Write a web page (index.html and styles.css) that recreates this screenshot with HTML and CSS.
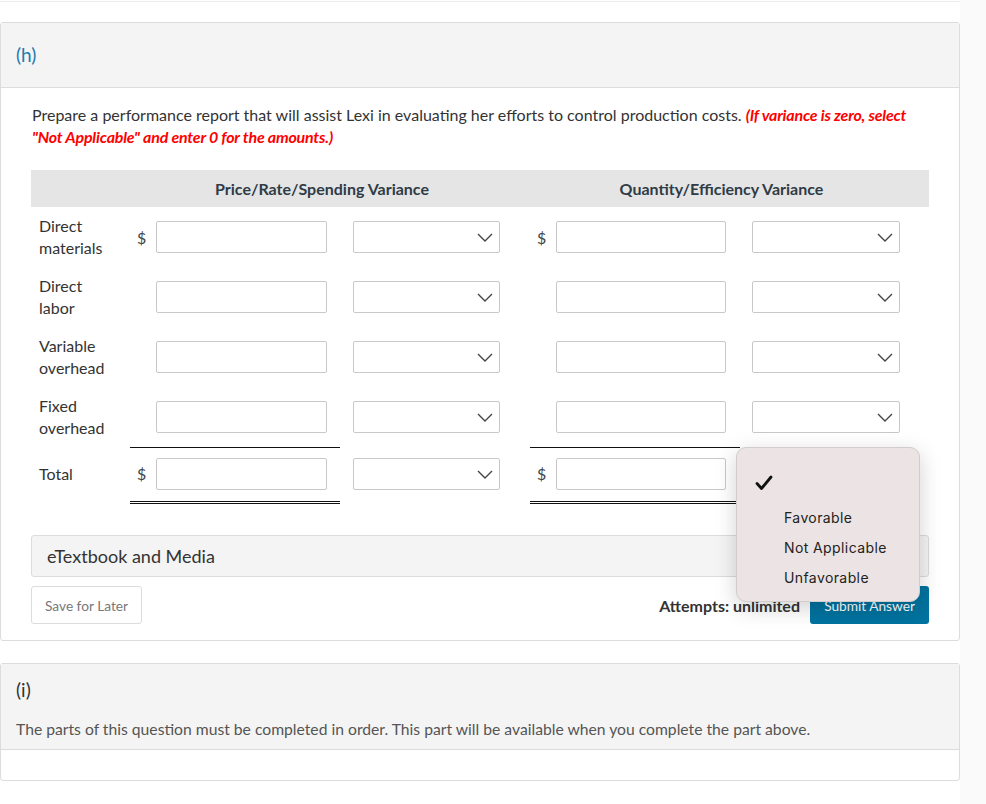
FILE: index.html
```html
<!DOCTYPE html>
<html>
<head>
<meta charset="utf-8">
<link rel="stylesheet" href="styles.css">
</head>
<body>
<div class="page">
  <main class="col">
    <div class="prev"></div>
    <section class="card">
      <div class="card-head"><span class="part">(h)</span></div>
      <div class="card-body">
        <p class="prompt">Prepare a performance report that will assist Lexi in evaluating her efforts to control production costs. <em class="warn">(If variance is zero, select "Not Applicable" and enter 0 for the amounts.)</em></p>
        <div class="grid">
          <div class="thead">
            <div class="th th1">Price/Rate/Spending Variance</div>
            <div class="th th2">Quantity/Efficiency Variance</div>
          </div>

          <div class="row">
            <div class="lbl">Direct<br>materials</div>
            <div class="cur">$</div><div class="inp"></div><div class="sp"></div><div class="sel"><svg viewBox="0 0 16 9"><path d="M1 1l7 7 7-7"/></svg></div>
            <div class="sp2"></div>
            <div class="cur">$</div><div class="inp"></div><div class="sp"></div><div class="sel"><svg viewBox="0 0 16 9"><path d="M1 1l7 7 7-7"/></svg></div>
          </div>
          <div class="row">
            <div class="lbl">Direct<br>labor</div>
            <div class="cur"></div><div class="inp"></div><div class="sp"></div><div class="sel"><svg viewBox="0 0 16 9"><path d="M1 1l7 7 7-7"/></svg></div>
            <div class="sp2"></div>
            <div class="cur"></div><div class="inp"></div><div class="sp"></div><div class="sel"><svg viewBox="0 0 16 9"><path d="M1 1l7 7 7-7"/></svg></div>
          </div>
          <div class="row">
            <div class="lbl">Variable<br>overhead</div>
            <div class="cur"></div><div class="inp"></div><div class="sp"></div><div class="sel"><svg viewBox="0 0 16 9"><path d="M1 1l7 7 7-7"/></svg></div>
            <div class="sp2"></div>
            <div class="cur"></div><div class="inp"></div><div class="sp"></div><div class="sel"><svg viewBox="0 0 16 9"><path d="M1 1l7 7 7-7"/></svg></div>
          </div>
          <div class="row">
            <div class="lbl">Fixed<br>overhead</div>
            <div class="cur"></div><div class="inp"></div><div class="sp"></div><div class="sel"><svg viewBox="0 0 16 9"><path d="M1 1l7 7 7-7"/></svg></div>
            <div class="sp2"></div>
            <div class="cur"></div><div class="inp"></div><div class="sp"></div><div class="sel"><svg viewBox="0 0 16 9"><path d="M1 1l7 7 7-7"/></svg></div>
          </div>
          <div class="row total">
            <div class="lbl">Total</div>
            <div class="cur">$</div><div class="inp"></div><div class="sp"></div><div class="sel"><svg viewBox="0 0 16 9"><path d="M1 1l7 7 7-7"/></svg></div>
            <div class="sp2"></div>
            <div class="cur">$</div><div class="inp"></div><div class="sp"></div><div class="sel"><svg viewBox="0 0 16 9"><path d="M1 1l7 7 7-7"/></svg></div>
            <div class="rule rule-a"></div>
            <div class="rule rule-b"></div>
            <div class="dbl dbl-a"></div>
            <div class="dbl dbl-b"></div>
          </div>
        </div>

        <div class="media">eTextbook and Media</div>
        <div class="actions">
          <button class="save">Save for Later</button>
          <div class="right">
            <span class="attempts">Attempts: unlimited</span>
            <button class="submit">Submit Answer</button>
          </div>
        </div>
      </div>
    </section>

    <section class="card card2">
      <div class="card2-head">
        <div class="part2">(i)</div>
        <p class="locked">The parts of this question must be completed in order. This part will be available when you complete the part above.</p>
      </div>
      <div class="card2-foot"></div>
    </section>
  </main>
  <aside class="strip"></aside>

  <div class="menu">
    <div class="opt checked"><svg class="check" viewBox="0 0 18 18"><path d="M2 9.5l4.5 5L16 3"/></svg></div>
    <div class="opt">Favorable</div>
    <div class="opt">Not Applicable</div>
    <div class="opt">Unfavorable</div>
  </div>
</div>
</body>
</html>
```

FILE: styles.css
```css
* { box-sizing: border-box; }
html, body { margin: 0; padding: 0; background: #fff; }
body {
  font-family: Lato, "Liberation Sans", sans-serif;
  color: #333;
  font-size: 16px;
}
.page {
  position: relative;
  display: flex;
  width: 986px;
  min-height: 804px;
}
.col { width: 960px; }
.strip { flex: 1; background: #fafafa; }
.prev { height: 2px; border-bottom: 1px solid #ececec; }

.card {
  margin-top: 20px;
  border: 1px solid #dcdcdc;
  border-radius: 3px;
  background: #fff;
}
.card-head {
  height: 65px;
  background: #f4f4f4;
  border-bottom: 1px solid #dcdcdc;
  padding: 20px 0 0 15px;
}
.part { font-size: 19px; color: #1d7bb3; line-height: 24px; }

.card-body { padding: 0 30px 16px 30px; }
.prompt {
  margin: 16px 0 0 1px;
  line-height: 22px;
  font-size: 16px;
  color: #333;
}
.warn { color: #f00; font-weight: bold; font-style: italic; letter-spacing: -0.2px; }

.grid { margin-top: 22px; }
.thead {
  display: grid;
  grid-template-columns: 99px 400px 399px;
  height: 37px;
  background: #e5e5e5;
  align-items: center;
  font-weight: bold;
  font-size: 16px;
  color: #2f3b45;
}
.th { text-align: center; }
.th1 { grid-column: 2; padding-right: 16px; }
.th2 { grid-column: 3; padding-right: 16px; }

.row {
  display: grid;
  grid-template-columns: 99px 26px 171px 26px 147px 30px 26px 170px 26px 148px 29px;
  align-items: center;
  height: 60px;
  position: relative;
}
.lbl { padding-left: 8px; line-height: 22px; font-size: 16px; color: #333; }
.cur { padding-left: 7px; font-size: 16px; color: #444; }
.inp {
  height: 32px;
  border: 1px solid #c8c8c8;
  border-radius: 2px;
  background: #fff;
}
.sel {
  height: 32px;
  border: 1px solid #c8c8c8;
  border-radius: 2px;
  background: #fff;
  display: flex;
  align-items: center;
  justify-content: flex-end;
  padding-right: 6px;
}
.sel svg { width: 16px; height: 9px; }
.sel path { fill: none; stroke: #444; stroke-width: 1.4; }

.total {
  height: 57px;
  align-items: start;
  padding-top: 11px;
}
.total .lbl, .total .cur { line-height: 32px; }
.rule, .dbl { position: absolute; }
.rule { top: 0; height: 1px; background: #111; }
.rule-a { left: 99px; width: 210px; }
.rule-b { left: 499px; width: 210px; }
.dbl { bottom: 0; height: 3px; border-top: 3px double #111; }
.dbl-a { left: 99px; width: 210px; }
.dbl-b { left: 499px; width: 210px; }

.media {
  margin-top: 31px;
  height: 42px;
  border: 1px solid #dcdcdc;
  border-radius: 3px;
  background: #f4f4f4;
  padding-left: 15px;
  font-size: 18px;
  line-height: 40px;
  color: #333;
}
.actions {
  margin-top: 9px;
  display: flex;
  justify-content: space-between;
  align-items: center;
}
.save {
  height: 38px;
  width: 111px;
  border: 1px solid #dcdcdc;
  border-radius: 3px;
  background: #fff;
  font-family: Lato, "Liberation Sans", sans-serif;
  font-size: 13.7px;
  color: #777;
  padding: 0;
}
.right { display: flex; align-items: center; gap: 10px; }
.attempts { font-weight: bold; font-size: 16px; color: #333; }
.submit {
  height: 38px;
  width: 119px;
  border: none;
  border-radius: 3px;
  background: #00739f;
  color: #fff;
  font-family: Lato, "Liberation Sans", sans-serif;
  font-size: 13.7px;
  padding: 0;
}

.card2 { margin-top: 22px; }
.card2-head {
  background: #f4f4f4;
  border-bottom: 1px solid #dcdcdc;
  padding: 14px 15px 9px 15px;
}
.part2 { font-size: 19px; line-height: 24px; color: #333; }
.locked { margin: 16px 0 0 0; font-size: 15.7px; line-height: 22px; color: #555; }
.card2-foot { height: 30px; }

.menu {
  position: absolute;
  left: 736px;
  top: 447px;
  width: 184px;
  height: 155px;
  background: #ece4e4;
  border: 1px solid #d2cccc;
  border-radius: 10px;
  box-shadow: 0 6px 22px rgba(0,0,0,0.18);
  padding-top: 18px;
  font-family: Inter, "Liberation Sans", sans-serif;
  font-size: 14px;
  letter-spacing: 0.4px;
  color: #222;
}
.opt { height: 30px; line-height: 30px; padding-left: 47px; }
.opt.checked { height: 37px; padding-left: 18px; }
.check { width: 18px; height: 18px; margin-top: 8px; }
.check path { fill: none; stroke: #111; stroke-width: 2.8; stroke-linecap: round; stroke-linejoin: round; }
```
